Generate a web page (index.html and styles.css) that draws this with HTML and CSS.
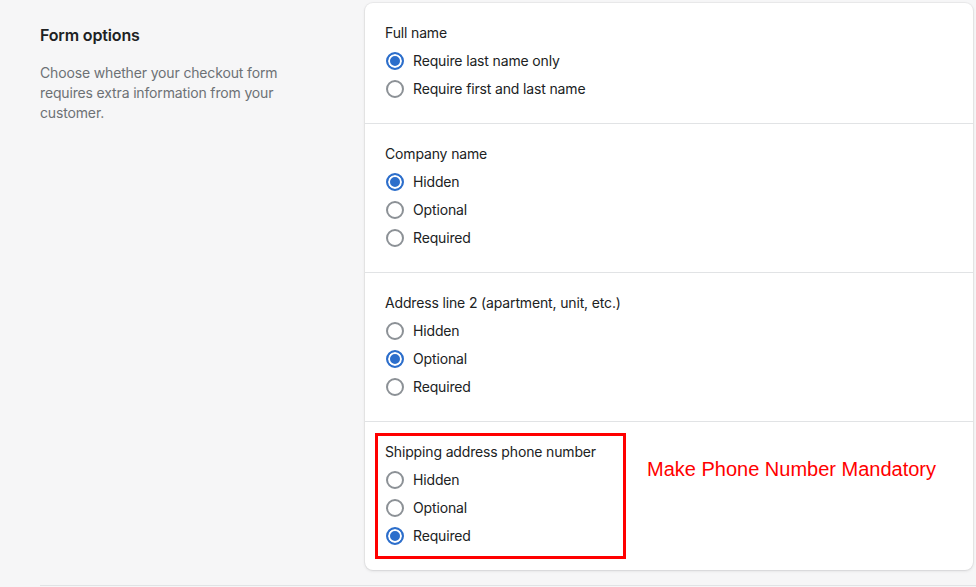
FILE: index.html
```html
<!doctype html>
<html lang="en">
    <head>
        <meta charset="utf-8">
        <title>Checkout - Form options</title>
        <link rel="stylesheet" href="styles.css">
    </head>
    <body>
        <div class="layout">
            <div class="aside">
                <h2>Form options</h2>
                <p>Choose whether your checkout form requires extra information from your customer.</p>
            </div>
            <div class="card">
                <div class="section">
                    <div class="label">Full name</div>
                    <label class="choice"><input type="radio" name="fullname" checked> Require last name only</label>
                    <label class="choice"><input type="radio" name="fullname"> Require first and last name</label>
                </div>
                <div class="section">
                    <div class="label">Company name</div>
                    <label class="choice"><input type="radio" name="company" checked> Hidden</label>
                    <label class="choice"><input type="radio" name="company"> Optional</label>
                    <label class="choice"><input type="radio" name="company"> Required</label>
                </div>
                <div class="section">
                    <div class="label">Address line 2 (apartment, unit, etc.)</div>
                    <label class="choice"><input type="radio" name="address2"> Hidden</label>
                    <label class="choice"><input type="radio" name="address2" checked> Optional</label>
                    <label class="choice"><input type="radio" name="address2"> Required</label>
                </div>
                <div class="section note">
                    <div class="label">Shipping address phone number</div>
                    <label class="choice"><input type="radio" name="phone"> Hidden</label>
                    <label class="choice"><input type="radio" name="phone"> Optional</label>
                    <label class="choice"><input type="radio" name="phone" checked> Required</label>
                    <div class="mark"></div>
                    <div class="mark-text">Make Phone Number Mandatory</div>
                </div>
            </div>
        </div>
        <div class="rule"></div>
    </body>
</html>
```

FILE: styles.css
```css
body{margin:0;background:#f6f6f7;font:14px/20px Inter,"Noto Sans",sans-serif;letter-spacing:-0.15px;color:#202223;}
.layout{display:flex;padding:3px 3px 0 40px;}
.aside{flex:0 0 325px;padding-top:20px;}
.aside h2{margin:0;font-size:16px;line-height:24px;font-weight:600;}
.aside p{margin:16px 0 0;width:245px;color:#6d7175;}
.card{flex:1;background:#fff;border-radius:8px;box-shadow:0 0 0 1px rgba(63,63,68,0.05),0 1px 3px rgba(63,63,68,0.15);}
.section{padding:20px 20px 20px;border-top:1px solid #e1e3e5;}
.section:first-child{border-top:0;}
.label{margin-bottom:4px;}
.choice{display:flex;align-items:center;height:28px;gap:9px;}
.choice input{appearance:none;-webkit-appearance:none;margin:0 0 0 1px;width:18px;height:18px;border:2px solid #8c9196;border-radius:50%;background:#fff;}
.choice input:checked{border-color:#2c6ecb;background:#2c6ecb;box-shadow:inset 0 0 0 2px #fff;}
.note{position:relative;}
.mark{position:absolute;left:10px;top:11px;width:245px;height:120px;border:3px solid #ff0000;}
.mark-text{position:absolute;left:282px;top:36px;font:20px/22px "Liberation Sans",Arial,sans-serif;letter-spacing:0;color:#ff0000;}
.rule{margin:15px 0 0 40px;border-top:1px solid #e1e3e5;}
```
